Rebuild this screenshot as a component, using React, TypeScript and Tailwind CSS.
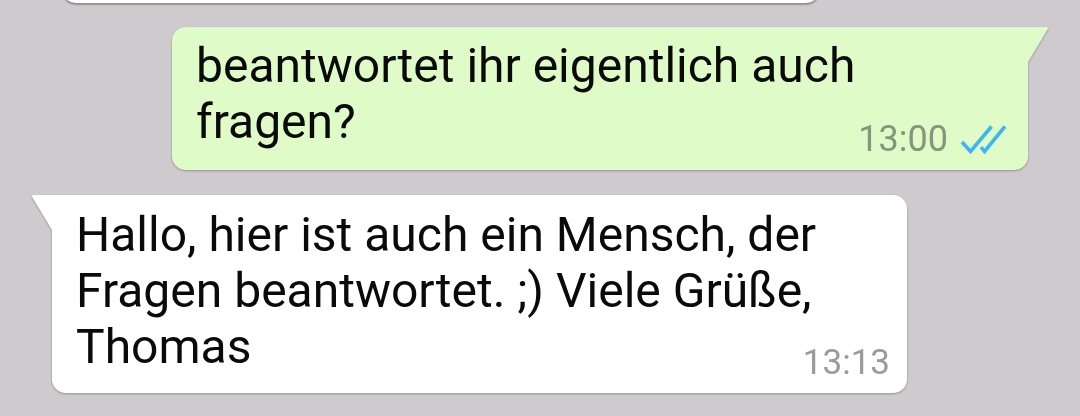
import React from 'react';

const DoubleCheck: React.FC = () => (
    <svg width="46" height="30" viewBox="0 0 46 30" fill="none" stroke="#3fb5ef" strokeWidth={3.6} strokeLinejoin="miter">
        <path d="M2 18 L10.5 27.5 L31.5 2.5" />
        <path d="M21 23 L24.5 27.5 L45 2.5" />
    </svg>
);

const App: React.FC = () => {
    return (
        <div className="w-[1080px] h-[416px] overflow-hidden bg-[#cecacd] flex flex-col font-['Roboto',sans-serif] text-[#0a0a0a]">
            {/* previous message, only its bottom edge shows */}
            <div className="ml-[62px] w-[758px] h-[40px] -mt-[37px] shrink-0 bg-white rounded-b-[14px] shadow-[0_1.5px_1.5px_rgba(0,0,0,0.28)]" />

            {/* outgoing */}
            <div className="mt-[24px] ml-auto mr-[52px] relative drop-shadow-[0_1.5px_1px_rgba(0,0,0,0.28)]">
                <div className="w-[856px] bg-[#dffbc7] rounded-[14px] rounded-tr-none pl-6 pr-[22px] pt-[11px] pb-[11px] grid">
                    <p className="[grid-area:1/1] text-[48px] leading-[56px] mb-[9px] whitespace-nowrap">
                        beantwortet ihr eigentlich auch
                        <br />
                        fragen?
                    </p>
                    <div className="[grid-area:1/1] self-end justify-self-end flex items-center gap-[12px]">
                        <span className="text-[36px] leading-[40px] text-[#86957b]">13:00</span>
                        <DoubleCheck />
                    </div>
                </div>
                <div className="absolute left-full top-0 w-[21px] h-[35px] bg-[#dffbc7] [clip-path:polygon(0_0,100%_0,0_100%)] rounded-tr-[3px]" />
            </div>

            {/* incoming */}
            <div className="mt-[25px] ml-[52px] relative self-start drop-shadow-[0_1.5px_1px_rgba(0,0,0,0.28)]">
                <div className="absolute right-full top-0 w-[21px] h-[35px] bg-white [clip-path:polygon(0_0,100%_0,100%_100%)] rounded-tl-[3px]" />
                <div className="w-[855px] bg-white rounded-[14px] rounded-tl-none pl-6 pr-[17px] pt-[12px] pb-[10px] grid">
                    <p className="[grid-area:1/1] text-[48px] leading-[56px] mb-[8px] whitespace-nowrap">
                        Hallo, hier ist auch ein Mensch, der
                        <br />
                        Fragen beantwortet. ;) Viele Grüße,
                        <br />
                        Thomas
                    </p>
                    <span className="[grid-area:1/1] self-end justify-self-end text-[35px] leading-[40px] text-[#9b9b9b]">13:13</span>
                </div>
            </div>
        </div>
    );
};

export default App;
